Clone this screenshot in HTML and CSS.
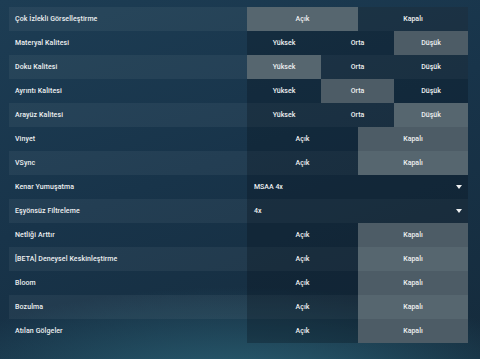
FILE: index.html
```html
<!DOCTYPE html>
<html lang="tr">
<head>
  <meta charset="UTF-8" />
  <meta name="viewport" content="width=device-width, initial-scale=1" />
  <title>Görüntü Ayarları</title>
  <link rel="stylesheet" href="styles.css">
</head>
<body>
  <div class="settings">
    <div class="row">
      <div class="label">Çok İzlekli Görselleştirme</div>
      <div class="choices two"><div class="choice on">Açık</div><div class="choice">Kapalı</div></div>
    </div>
    <div class="row">
      <div class="label">Materyal Kalitesi</div>
      <div class="choices three"><div class="choice">Yüksek</div><div class="choice">Orta</div><div class="choice on">Düşük</div></div>
    </div>
    <div class="row">
      <div class="label">Doku Kalitesi</div>
      <div class="choices three"><div class="choice on">Yüksek</div><div class="choice">Orta</div><div class="choice">Düşük</div></div>
    </div>
    <div class="row">
      <div class="label">Ayrıntı Kalitesi</div>
      <div class="choices three"><div class="choice">Yüksek</div><div class="choice on">Orta</div><div class="choice">Düşük</div></div>
    </div>
    <div class="row">
      <div class="label">Arayüz Kalitesi</div>
      <div class="choices three"><div class="choice">Yüksek</div><div class="choice">Orta</div><div class="choice on">Düşük</div></div>
    </div>
    <div class="row">
      <div class="label">Vinyet</div>
      <div class="choices two"><div class="choice">Açık</div><div class="choice on">Kapalı</div></div>
    </div>
    <div class="row">
      <div class="label">VSync</div>
      <div class="choices two"><div class="choice">Açık</div><div class="choice on">Kapalı</div></div>
    </div>
    <div class="row">
      <div class="label">Kenar Yumuşatma</div>
      <div class="dropdown"><span>MSAA 4x</span><span class="arrow"></span></div>
    </div>
    <div class="row">
      <div class="label">Eşyönsüz Filtreleme</div>
      <div class="dropdown"><span>4x</span><span class="arrow"></span></div>
    </div>
    <div class="row">
      <div class="label">Netliği Arttır</div>
      <div class="choices two"><div class="choice">Açık</div><div class="choice on">Kapalı</div></div>
    </div>
    <div class="row">
      <div class="label">[BETA] Deneysel Keskinleştirme</div>
      <div class="choices two"><div class="choice">Açık</div><div class="choice on">Kapalı</div></div>
    </div>
    <div class="row">
      <div class="label">Bloom</div>
      <div class="choices two"><div class="choice">Açık</div><div class="choice on">Kapalı</div></div>
    </div>
    <div class="row">
      <div class="label">Bozulma</div>
      <div class="choices two"><div class="choice">Açık</div><div class="choice on">Kapalı</div></div>
    </div>
    <div class="row">
      <div class="label">Atılan Gölgeler</div>
      <div class="choices two"><div class="choice">Açık</div><div class="choice on">Kapalı</div></div>
    </div>
  </div>
</body>
</html>
```

FILE: styles.css
```css
body {
  margin: 0;
  height: 359px;
  overflow: hidden;
  font-family: Roboto, "DejaVu Sans", sans-serif;
  font-size: 7px;
  color: #eef0f1;
  background:
    radial-gradient(ellipse 70% 30% at 50% 110%, #2c6579 0%, rgba(44, 101, 121, 0) 100%),
    linear-gradient(160deg, #1d3d54 0%, #18344a 45%, #152b3c 100%);
}
.settings {
  padding: 7px 12px 0 9px;
}
.row {
  display: grid;
  grid-template-columns: 238px 221px;
  height: 24px;
}
.row:nth-child(odd) { background: rgba(255, 255, 255, 0.05); }
.label {
  display: flex;
  align-items: center;
  padding-left: 6px;
  font-weight: 500;
  letter-spacing: 0.1px;
}
.choices {
  display: grid;
}
.choices.two { grid-template-columns: 111px 110px; }
.choices.three { grid-template-columns: 74px 73px 74px; }
.choice {
  display: flex;
  align-items: center;
  justify-content: center;
  background: rgba(8, 18, 28, 0.3);
  font-weight: 500;
}
.choice.on { background: #56666f; }
.row:nth-child(even) .choice.on { background: #4d5c66; }
.dropdown {
  display: flex;
  align-items: center;
  justify-content: space-between;
  padding: 0 6px 0 7px;
  background: rgba(8, 18, 28, 0.3);
  font-weight: 500;
}
.arrow {
  width: 0;
  height: 0;
  border-left: 3px solid transparent;
  border-right: 3px solid transparent;
  border-top: 4px solid #eef0f1;
}
```
